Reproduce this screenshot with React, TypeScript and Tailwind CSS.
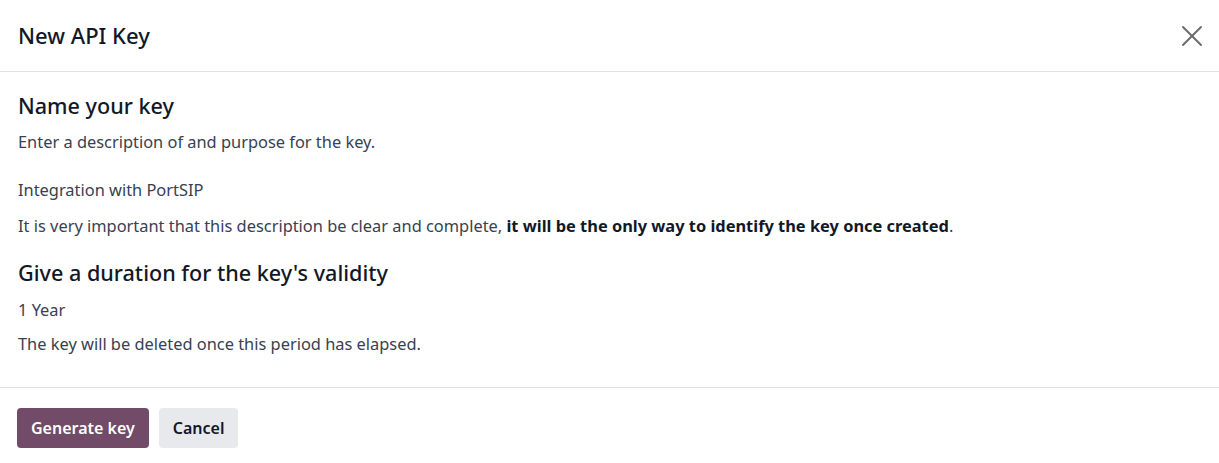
import React from "react";
import { X } from "lucide-react";

const App = () => {
  return (
    <div
      className="w-[1219px] h-[463px] bg-white text-[#374151]"
      style={{ fontFamily: "'Noto Sans', 'Open Sans', sans-serif" }}
    >
      <header className="h-[72px] flex items-center justify-between px-[18px] border-b border-[#dee2e6]">
        <h4 className="text-[22px] font-medium text-[#111827]">New API Key</h4>
        <button className="text-[#6b6b6b] -mr-[9px]">
          <X size={36} strokeWidth={1.3} />
        </button>
      </header>
      <main className="px-[18px] pt-[19px] pb-[31px] text-[16.4px] text-[#374151] border-b border-[#dee2e6]">
        <h3 className="text-[21.6px] font-medium text-[#111827] leading-[30px]">Name your key</h3>
        <p className="mt-[9px] leading-[24px]">Enter a description of and purpose for the key.</p>
        <p className="mt-[24px] leading-[24px]">Integration with PortSIP</p>
        <p className="mt-[12px] leading-[24px]">
          It is very important that this description be clear and complete,{" "}
          <b className="font-bold text-[#111827]">it will be the only way to identify the key once created</b>.
        </p>
        <h3 className="mt-[20px] text-[21.6px] font-medium text-[#111827] leading-[30px]">
          Give a duration for the key's validity
        </h3>
        <p className="mt-[10px] leading-[24px]">1 Year</p>
        <p className="mt-[10px] leading-[24px]">The key will be deleted once this period has elapsed.</p>
      </main>
      <footer className="flex gap-[10px] px-[17px] pt-[20px]">
        <button className="h-[40px] px-[14px] rounded-[4px] bg-[#714b67] text-white text-[16px] font-semibold">
          Generate key
        </button>
        <button className="h-[40px] px-[14px] rounded-[4px] bg-[#e7e9ed] text-[#111827] text-[16px] font-semibold">
          Cancel
        </button>
      </footer>
    </div>
  );
};

export default App;
